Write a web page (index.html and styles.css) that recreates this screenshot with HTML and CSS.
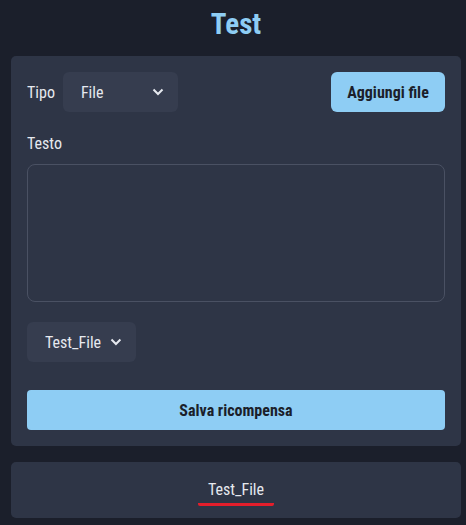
FILE: index.html
```html
<!DOCTYPE html>
<html lang="it">
<head>
<meta charset="utf-8">
<link rel="stylesheet" href="styles.css">
</head>
<body>
<h1 class="title">Test</h1>
<div class="card form-card">
  <div class="row-top">
    <label class="inline-label">Tipo</label>
    <div class="select select-type"><span>File</span><svg class="chev" viewBox="0 0 12 8" width="12" height="8"><path d="M1.5 1.5 L6 6 L10.5 1.5" fill="none" stroke="#e6e9ef" stroke-width="2"/></svg></div>
    <div class="spacer"></div>
    <button class="btn btn-add">Aggiungi file</button>
  </div>
  <div class="field-label">Testo</div>
  <div class="textarea"></div>
  <div class="select select-file"><span>Test_File</span><svg class="chev" viewBox="0 0 12 8" width="12" height="8"><path d="M1.5 1.5 L6 6 L10.5 1.5" fill="none" stroke="#e6e9ef" stroke-width="2"/></svg></div>
  <button class="btn btn-save">Salva ricompensa</button>
</div>
<div class="card tab-card">
  <span class="tab">Test_File</span>
</div>
</body>
</html>
```
FILE: styles.css
```css
* { box-sizing: border-box; }
html, body { margin: 0; padding: 0; }
body {
  background: #1b1f2b;
  font-family: "Roboto Condensed", Roboto, "Liberation Sans", sans-serif;
  font-stretch: condensed;
  color: #e6e9ef;
  padding: 0 5px 0 11px;
  width: 466px;
  height: 525px;
}
.title {
  margin: 0;
  height: 50px;
  padding-top: 6px;
  text-align: center;
  font-size: 29px;
  font-weight: 700;
  color: #8ecdf4;
  line-height: 36px;
}
.card {
  background: #2e3546;
  border-radius: 5px;
  margin-top: 6px;
}
.form-card {
  padding: 16px 16px 16px 16px;
  display: flex;
  flex-direction: column;
}
.row-top {
  display: flex;
  align-items: center;
  height: 40px;
}
.inline-label { font-size: 16px; margin-right: 8px; }
.select {
  background: #363d4f;
  border-radius: 6px;
  height: 40px;
  display: flex;
  align-items: center;
  font-size: 16px;
}
.select-type { width: 115px; padding: 0 14px 0 18px; justify-content: space-between; }
.select-file { width: 109px; padding: 0 14px 0 18px; margin-top: 20px; gap: 9px; }
.spacer { flex: 1; }
.btn {
  border: 0;
  background: #8ecdf4;
  color: #1b1f2b;
  font-family: inherit;
  font-stretch: condensed;
  font-weight: 700;
  font-size: 16px;
  height: 40px;
  border-radius: 6px;
}
.btn-add { width: 114px; padding: 0; }
.field-label { font-size: 16px; margin-top: 22px; line-height: 20px; height: 20px; }
.textarea {
  margin-top: 10px;
  height: 138px;
  border: 1px solid #4a5163;
  border-radius: 8px;
}
.btn-save { margin-top: 28px; width: 100%; border-radius: 4px; }
.tab-card {
  margin-top: 16px;
  height: 56px;
  display: flex;
  justify-content: center;
  align-items: center;
}
.tab {
  font-size: 16px;
  line-height: 22px;
  padding: 0 10px 2px;
  position: relative;
  top: 2px;
  border-bottom: 3px solid #e41e2b;
  border-radius: 0 0 2px 2px;
}
```
